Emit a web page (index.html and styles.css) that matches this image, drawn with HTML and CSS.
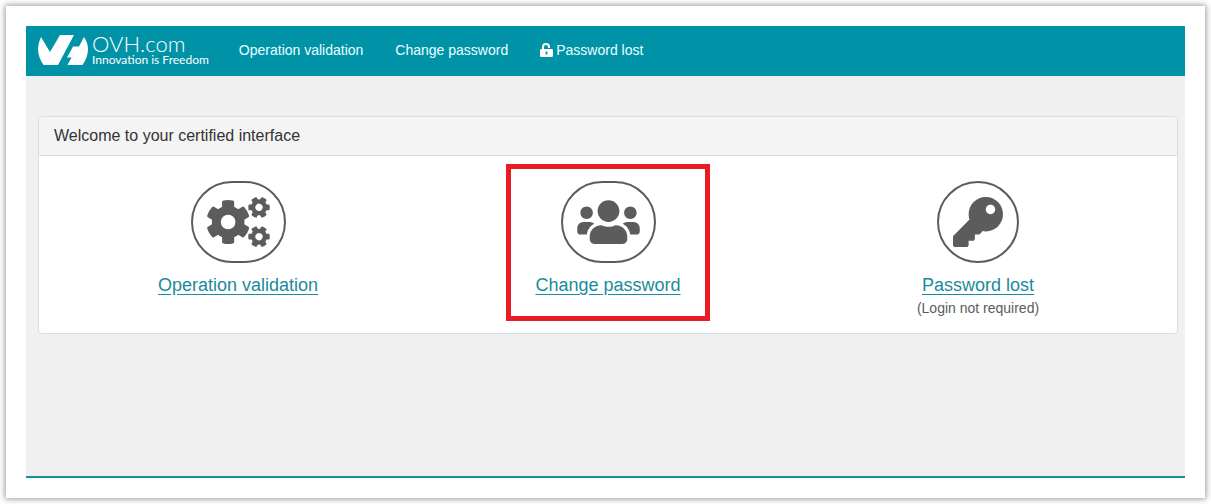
FILE: index.html
```html
<!DOCTYPE html>
<html lang="en">
<head>
<meta charset="utf-8">
<meta name="viewport" content="width=device-width, initial-scale=1">
<title>OVH.com – Certified interface</title>
<link rel="stylesheet" href="styles.css">
</head>
<body>
<div class="sheet">
  <div class="app">
    <header class="navbar">
      <a class="brand" href="#">
        <svg class="brand-mark" viewBox="0 0 50 30" aria-hidden="true">
          <path d="M3 2 12 17 22 0H36L20 30H5.500Q0 22 0 14 0 8 3 2Z"/>
          <path d="M46 2Q50 8 50 14 50 22 44.500 30H29.500L33.500 22.500H29L35 11.500H41Z"/>
        </svg>
        <span class="brand-text">
          <span class="brand-name">OVH.com</span>
          <span class="brand-tag">Innovation is Freedom</span>
        </span>
      </a>
      <nav class="menu">
        <a href="#">Operation validation</a>
        <a href="#">Change password</a>
        <a href="#"><svg class="lock" viewBox="0 0 13 14" aria-hidden="true"><path class="shackle" d="M3 7V4a3 3 0 0 1 6 0V5"/><path fill-rule="evenodd" d="M1.300 6H11.700Q13 6 13 7.300V12.700Q13 14 11.700 14H1.300Q0 14 0 12.700V7.300Q0 6 1.300 6ZM5.600 8.600V11.400H7.400V8.600Z"/></svg>Password lost</a>
      </nav>
    </header>
    <main class="content">
      <section class="panel">
        <h1 class="panel-title">Welcome to your certified interface</h1>
        <div class="tiles">
          <div class="tile">
            <span class="round">
              <svg class="icon-wide" viewBox="0 0 640 512" aria-hidden="true">
                <defs>
                  <g id="gear">
                    <circle r="121" fill="none" stroke="currentColor" stroke-width="92"/>
                    <g id="teeth">
                      <path id="tooth" d="M-62-130V-204Q-62-216-48-219Q0-230 48-219Q62-216 62-204V-130Z"/>
                      <use href="#tooth" transform="rotate(60)"/>
                      <use href="#tooth" transform="rotate(120)"/>
                    </g>
                    <use href="#teeth" transform="rotate(180)"/>
                  </g>
                </defs>
                <use href="#gear" transform="translate(214 256)"/>
                <use href="#gear" transform="translate(530 106) rotate(30) scale(.49)"/>
                <use href="#gear" transform="translate(530 406) rotate(30) scale(.49)"/>
              </svg>
            </span>
            <a class="tile-link" href="#">Operation validation</a>
          </div>
          <div class="tile">
            <div class="highlight">
              <span class="round">
                <svg class="icon-wide" viewBox="0 0 640 512" aria-hidden="true"><path d="M96 224c35.300 0 64-28.700 64-64s-28.700-64-64-64-64 28.700-64 64 28.700 64 64 64zm448 0c35.300 0 64-28.700 64-64s-28.700-64-64-64-64 28.700-64 64 28.700 64 64 64zm32 32h-64c-17.600 0-33.500 7.100-45.100 18.600 40.300 22.100 68.900 62 75.100 109.400h66c17.700 0 32-14.300 32-32v-32c0-35.300-28.700-64-64-64zm-256 0c61.900 0 112-50.100 112-112S381.900 32 320 32 208 82.100 208 144s50.100 112 112 112zm76.800 32h-8.300c-20.800 10-43.900 16-68.500 16s-47.600-6-68.500-16h-8.300C179.600 288 128 339.600 128 403.200V432c0 26.500 21.500 48 48 48h288c26.500 0 48-21.500 48-48v-28.800c0-63.600-51.600-115.200-115.200-115.200zm-223.700-13.400C161.500 263.100 145.600 256 128 256H64c-35.300 0-64 28.700-64 64v32c0 17.700 14.300 32 32 32h65.900c6.300-47.400 34.900-87.300 75.200-109.400z"/></svg>
              </span>
              <a class="tile-link" href="#">Change password</a>
            </div>
          </div>
          <div class="tile">
            <span class="round">
              <svg class="icon-square" viewBox="0 0 512 512" aria-hidden="true"><path d="M512 176C512 273.200 433.200 352 336 352c-11.200 0-22.200-1.100-32.800-3.100l-24 27A24 24 0 0 1 261.200 384H224v40c0 13.300-10.700 24-24 24h-40v40c0 13.300-10.700 24-24 24H24c-13.300 0-24-10.700-24-24v-78c0-6.400 2.500-12.500 7-17l161.800-161.800C163.100 213.800 160 195.300 160 176 160 78.800 238.800 0 336 0 433.500 0 512 78.500 512 176zM336 128c0 26.500 21.500 48 48 48s48-21.500 48-48-21.500-48-48-48-48 21.500-48 48z"/></svg>
            </span>
            <a class="tile-link" href="#">Password lost</a>
            <span class="note">(Login not required)</span>
          </div>
        </div>
      </section>
    </main>
  </div>
</div>
</body>
</html>
```
FILE: styles.css
```css
* {
  box-sizing: border-box;
}

body {
  margin: 0;
  padding: 6px;
  min-height: 100vh;
  display: flex;
  background: #fff;
  color: #5c5c5c;
  font: 14px/20px "Liberation Sans", Arial, sans-serif;
}

.sheet {
  flex: 1;
  display: flex;
  padding: 20px;
  background: #fff;
  box-shadow: 0 0 6px 1px rgba(0, 0, 0, .4);
}

.app {
  flex: 1;
  display: flex;
  flex-direction: column;
  background: #f0f0f0;
  border-bottom: 2px solid #1191a1;
}

.navbar {
  display: flex;
  align-items: center;
  height: 50px;
  padding: 0 12px 2px;
  gap: 30px;
  background: #0093a7;
}

.brand {
  display: flex;
  align-items: center;
  gap: 4px;
  color: #fff;
  text-decoration: none;
}

.brand-mark {
  width: 50px;
  height: 30px;
  fill: currentColor;
}

.brand-text {
  display: flex;
  flex-direction: column;
  font-family: Lato, sans-serif;
}

.brand-name {
  font-size: 22px;
  font-weight: 300;
  line-height: 20px;
}

.brand-tag {
  font-size: 12px;
  line-height: 12px;
}

.menu {
  display: flex;
  gap: 32px;
}

.menu a {
  display: flex;
  align-items: center;
  gap: 3px;
  color: #eaffff;
  text-decoration: none;
}

.lock {
  width: 13px;
  height: 14px;
  fill: #fff;
}

.shackle {
  fill: none;
  stroke: #fff;
  stroke-width: 2;
}

.content {
  flex: 1;
  padding: 40px 7px 40px 12px;
}

.panel {
  background: #fff;
  border: 1px solid #ddd;
  border-radius: 4px;
}

.panel-title {
  margin: 0;
  padding: 9px 15px;
  border-bottom: 1px solid #ddd;
  border-radius: 3px 3px 0 0;
  background: #f4f4f4;
  color: #333;
  font-size: 16px;
  font-weight: 400;
  line-height: 20px;
}

.tiles {
  display: grid;
  grid-template-columns: repeat(3, 1fr);
  padding: 8px 14px 12px;
}

.tile {
  display: flex;
  flex-direction: column;
  align-items: center;
  padding-top: 17px;
}

.tile:has(.highlight) {
  padding-top: 0;
}

.highlight {
  display: flex;
  flex-direction: column;
  align-items: center;
  padding: 12px 24px 21px;
  border: 5px solid #e91c24;
}

.round {
  display: flex;
  padding: 14px;
  border: 2px solid #5c5c5c;
  border-radius: 50px;
}

.icon-wide,
.icon-square {
  width: 50px;
  height: 50px;
  fill: currentColor;
}

.icon-wide {
  width: 63px;
}

.tile-link {
  margin-top: 12px;
  color: #1b8a9d;
  font-size: 18px;
  line-height: 20px;
  text-underline-offset: 3px;
}

.note {
  margin-top: 3px;
}
```
